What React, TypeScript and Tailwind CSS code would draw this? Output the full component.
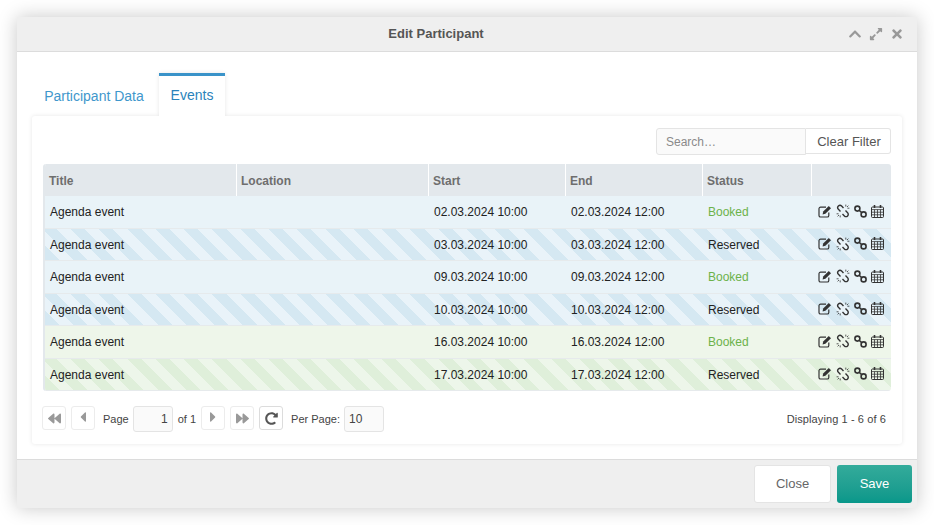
import React from 'react';
import {
  FaBackward,
  FaCaretLeft,
  FaCaretRight,
  FaChevronUp,
  FaExpandAlt,
  FaForward,
  FaRedoAlt,
  FaTimes,
} from 'react-icons/fa';

const rows = [
  { start: '02.03.2024 10:00', end: '02.03.2024 12:00', status: 'Booked', tone: 'blue' },
  { start: '03.03.2024 10:00', end: '03.03.2024 12:00', status: 'Reserved', tone: 'blueStripe' },
  { start: '09.03.2024 10:00', end: '09.03.2024 12:00', status: 'Booked', tone: 'blue' },
  { start: '10.03.2024 10:00', end: '10.03.2024 12:00', status: 'Reserved', tone: 'blueStripe' },
  { start: '16.03.2024 10:00', end: '16.03.2024 12:00', status: 'Booked', tone: 'green' },
  { start: '17.03.2024 10:00', end: '17.03.2024 12:00', status: 'Reserved', tone: 'greenStripe' },
];

const toneClass: Record<string, string> = {
  blue: 'bg-[#e9f3f8]',
  blueStripe:
    'bg-[repeating-linear-gradient(45deg,#d5e8f2_0px,#d5e8f2_10px,#e9f3f9_10px,#e9f3f9_20px)]',
  green: 'bg-[#eef6ea]',
  greenStripe:
    'bg-[repeating-linear-gradient(45deg,#dfefda_0px,#dfefda_10px,#edf6ea_10px,#edf6ea_20px)]',
};

const gridCols = 'grid grid-cols-[192px_192px_137px_137px_109px_1fr]';

const EditIcon = () => (
  <svg viewBox="0 0 14 13" className="h-[13px] w-[14px]">
    <path d="M8 2.2H2.6A1.6 1.6 0 0 0 1 3.8v6.6A1.6 1.6 0 0 0 2.6 12h6.6a1.6 1.6 0 0 0 1.6-1.6V7.6" fill="none" stroke="currentColor" strokeWidth="1.2" />
    <path d="M4.6 9.4 5.2 6.6 10.8 1l2.2 2.2-5.6 5.6z" fill="currentColor" />
  </svg>
);

const UnlinkIcon = () => (
  <svg viewBox="0 0 14 14" className="h-[14px] w-[14px]" fill="none" stroke="currentColor">
    <path d="M7.5 4 5.6 2.1a2.2 2.2 0 0 0-3.2 3.2L4.5 7.4" strokeWidth="1.4" />
    <path d="M6.5 10l1.9 1.9a2.2 2.2 0 0 0 3.2-3.2L9.5 6.6" strokeWidth="1.4" />
    <path d="M9.8.6v2M12.4 1.6l-1.4 1.4M13.4 4.2h-2M4.2 13.4v-2M1.6 12.4l1.4-1.4M.6 9.8h2" strokeWidth="0.8" />
  </svg>
);

const LinkIcon = () => (
  <svg viewBox="0 0 13 13" className="h-[13px] w-[13px]" fill="none" stroke="currentColor" strokeWidth="1.6">
    <circle cx="3.4" cy="3.6" r="2.5" />
    <circle cx="9.6" cy="9.4" r="2.5" />
    <path d="M4.8 5 8.2 8" />
  </svg>
);

const CalendarIcon = () => (
  <svg viewBox="0 0 13 13" className="h-[13px] w-[13px]" fill="none" stroke="currentColor">
    <rect x="0.5" y="2" width="12" height="10.5" rx="1" />
    <path d="M.5 4.6h12M.5 7.2h12M.5 9.8h12M3.5 4.6v8M6.5 4.6v8M9.5 4.6v8" strokeWidth="0.8" />
    <path d="M3.5 0v3M9.5 0v3" strokeWidth="1.6" />
  </svg>
);

const PagerButton: React.FC<{ children: React.ReactNode; dark?: boolean }> = ({ children, dark }) => (
  <button
    className={`flex h-6 w-6 items-center justify-center rounded-[3px] border bg-white ${
      dark ? 'border-[#dcdcdc] text-[#555]' : 'border-[#ececec] text-[#999]'
    }`}
  >
    {children}
  </button>
);

export default function App() {
  return (
    <div className="h-[525px] w-[934px] overflow-hidden bg-white pl-[17px] pt-[17px] font-['Liberation_Sans',Arial,sans-serif]">
      <div className="flex h-[491px] w-[900px] flex-col bg-white shadow-[0_0_18px_rgba(0,0,0,0.22)]">
        {/* Title bar */}
        <div className="relative flex h-[35px] shrink-0 items-center justify-center border-b border-[#dcdcdc] bg-[#efefef] pr-[62px]">
          <span className="text-[13px] font-bold text-[#555]">Edit Participant</span>
          <div className="absolute right-[13px] top-[10px] flex items-center gap-[7px] text-[#999]">
            <FaChevronUp className="h-[14px] w-[14px]" />
            <FaExpandAlt className="h-[14px] w-[14px]" />
            <FaTimes className="h-[14px] w-[14px]" />
          </div>
        </div>

        {/* Body */}
        <div className="flex flex-1 flex-col bg-white px-[15px] pt-[21px]">
          <div className="relative z-10 flex h-[43px] items-end">
            <div className="flex h-[43px] w-[127px] items-center justify-center pr-[3px] pt-[4px] text-[14px] text-[#3f97cc]">
              Participant Data
            </div>
            <div className="flex h-[43px] w-[66px] items-center justify-center border-t-[3px] border-[#3a93c9] bg-white pb-[1px] text-[14px] text-[#2a83bb] shadow-[0_0_4px_rgba(0,0,0,0.10)] [clip-path:inset(-6px_-6px_0_-6px)]">
              Events
            </div>
          </div>

          <div className="h-[328px] rounded-[3px] bg-white px-[11px] pt-[12px] shadow-[0_0_4px_rgba(0,0,0,0.10)]">
            {/* Toolbar */}
            <div className="flex h-[27px] justify-end">
              <div className="flex h-[27px] w-[150px] items-center rounded-l-[3px] border border-[#e4e4e4] bg-[#fafafa] px-[9px] text-[12px] text-[#8a8a8a]">
                Search…
              </div>
              <div className="flex h-[26px] w-[85px] items-center justify-center rounded-r-[3px] border border-l-0 border-[#e4e4e4] bg-white pl-[2px] pt-[1px] text-[13px] text-[#555]">
                Clear Filter
              </div>
            </div>

            {/* Grid */}
            <div className="mt-[9px] overflow-hidden rounded-[3px] border-l-2 border-[#e3e8ec] text-[12px]">
              <div className={`${gridCols} h-[32px] bg-[#e3e8ec] font-bold text-[#6e6e6e]`}>
                {['Title', 'Location', 'Start', 'End', 'Status', ''].map((h, i) => (
                  <div key={i} className={`flex items-center pl-[4px] pt-[2px] ${i < 5 ? 'border-r border-white' : ''}`}>
                    {h}
                  </div>
                ))}
              </div>
              {rows.map((r, i) => (
                <div
                  key={i}
                  className={`${gridCols} ${i % 2 === 0 ? 'h-[33px]' : 'h-[32px]'} items-center border-b border-[#e6eaec] text-[#222] ${toneClass[r.tone]}`}
                >
                  <div className="pl-[5px]">Agenda event</div>
                  <div />
                  <div className="pl-[5px]">{r.start}</div>
                  <div className="pl-[5px]">{r.end}</div>
                  <div className={`pl-[5px] ${r.status === 'Booked' ? 'text-[#6cb24a]' : ''}`}>{r.status}</div>
                  <div className="mb-[2px] flex items-center gap-[4px] pl-[6px] text-[#333]">
                    <EditIcon />
                    <UnlinkIcon />
                    <LinkIcon />
                    <CalendarIcon />
                  </div>
                </div>
              ))}
            </div>

            {/* Pager */}
            <div className="-ml-px mt-[15px] flex h-[26px] items-start text-[11px] text-[#444]">
              <PagerButton><FaBackward className="h-[13px] w-[13px]" /></PagerButton>
              <div className="ml-[5px]"><PagerButton><FaCaretLeft className="mb-[3px] h-[16px] w-[16px]" /></PagerButton></div>
              <span className="ml-[8px] flex h-[26px] items-center">Page</span>
              <div className="ml-[4px] flex h-[26px] w-[40px] items-center justify-end rounded-[3px] border border-[#e4e4e4] bg-[#fafafa] pr-[4px] text-[12px]">
                1
              </div>
              <span className="ml-[5px] flex h-[26px] items-center">of 1</span>
              <div className="ml-[5px]"><PagerButton><FaCaretRight className="mb-[3px] h-[16px] w-[16px]" /></PagerButton></div>
              <div className="ml-[5px]"><PagerButton><FaForward className="h-[13px] w-[13px]" /></PagerButton></div>
              <div className="ml-[5px]"><PagerButton dark><FaRedoAlt className="h-[13px] w-[13px]" /></PagerButton></div>
              <span className="ml-[8px] flex h-[26px] items-center">Per Page:</span>
              <div className="ml-[4px] flex h-[26px] w-[40px] items-center rounded-[3px] border border-[#e4e4e4] bg-[#fafafa] pl-[4px] text-[12px]">
                10
              </div>
              <span className="ml-auto mr-[5px] flex h-[26px] items-center tracking-[0.1px]">Displaying 1 - 6 of 6</span>
            </div>
          </div>
        </div>

        {/* Footer */}
        <div className="flex h-[49px] shrink-0 items-start justify-end gap-[6px] border-t border-[#dcdcdc] bg-[#efefef] pr-[5px] pt-[5px] text-[13px]">
          <button className="h-[38px] w-[77px] rounded-[3px] border border-[#e4e4e4] bg-white text-[#666]">Close</button>
          <button className="h-[38px] w-[75px] rounded-[3px] bg-gradient-to-b from-[#33ab9b] to-[#07978a] text-white">Save</button>
        </div>
      </div>
    </div>
  );
}
